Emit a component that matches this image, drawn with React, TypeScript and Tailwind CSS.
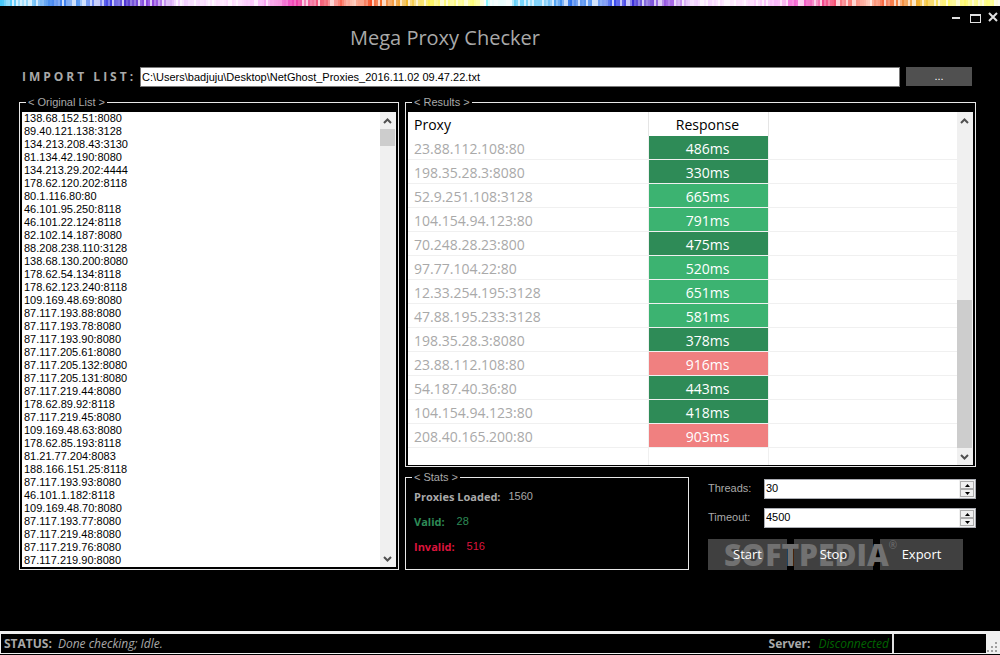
import { useState } from 'react';

const originalList = [
  '138.68.152.51:8080', '89.40.121.138:3128', '134.213.208.43:3130', '81.134.42.190:8080',
  '134.213.29.202:4444', '178.62.120.202:8118', '80.1.116.80:80', '46.101.95.250:8118',
  '46.101.22.124:8118', '82.102.14.187:8080', '88.208.238.110:3128', '138.68.130.200:8080',
  '178.62.54.134:8118', '178.62.123.240:8118', '109.169.48.69:8080', '87.117.193.88:8080',
  '87.117.193.78:8080', '87.117.193.90:8080', '87.117.205.61:8080', '87.117.205.132:8080',
  '87.117.205.131:8080', '87.117.219.44:8080', '178.62.89.92:8118', '87.117.219.45:8080',
  '109.169.48.63:8080', '178.62.85.193:8118', '81.21.77.204:8083', '188.166.151.25:8118',
  '87.117.193.93:8080', '46.101.1.182:8118', '109.169.48.70:8080', '87.117.193.77:8080',
  '87.117.219.48:8080', '87.117.219.76:8080', '87.117.219.90:8080',
];

const results: [string, number][] = [
  ['23.88.112.108:80', 486],
  ['198.35.28.3:8080', 330],
  ['52.9.251.108:3128', 665],
  ['104.154.94.123:80', 791],
  ['70.248.28.23:800', 475],
  ['97.77.104.22:80', 520],
  ['12.33.254.195:3128', 651],
  ['47.88.195.233:3128', 581],
  ['198.35.28.3:8080', 378],
  ['23.88.112.108:80', 916],
  ['54.187.40.36:80', 443],
  ['104.154.94.123:80', 418],
  ['208.40.165.200:80', 903],
];

const responseColor = (ms: number) => {
  if (ms < 500) return 'bg-[#2e8b57]';
  if (ms < 900) return 'bg-[#3cb371]';
  return 'bg-[#f08080]';
};

// position, r, g, b
const spectrum = [
  [-31, 60, 240, 255], [-26, 230, 255, 255], [-6, 225, 255, 255], [0, 70, 200, 250], [30, 110, 200, 250],
  [55, 40, 110, 235], [80, 80, 150, 245], [103, 20, 30, 230], [128, 90, 60, 210], [150, 130, 50, 220],
  [175, 240, 205, 255], [220, 255, 225, 255], [260, 250, 180, 250], [288, 240, 60, 190], [320, 245, 80, 110],
  [340, 250, 90, 70], [352, 255, 190, 170], [370, 245, 75, 30], [405, 240, 180, 40], [430, 255, 245, 90],
  [475, 255, 255, 110], [484, 255, 255, 255],
];

const spectrumAt = (x: number) => {
  const pos = x > 484 ? x - 515 : x;
  const i = Math.max(1, spectrum.findIndex((s) => s[0] >= pos));
  const [a, b] = [spectrum[i - 1], spectrum[i]];
  const t = (pos - a[0]) / (b[0] - a[0]);
  const noise = Math.abs(Math.sin(x * 12.9898) * 43758.5453) % 1;
  const white = noise > 0.75 ? 0.75 : noise * 0.6;
  const c = [1, 2, 3].map((k) => {
    const v = a[k] + (b[k] - a[k]) * t;
    return Math.round(v + (255 - v) * white);
  });
  return `rgb(${c.join(',')})`;
};

const stripes = Array.from({ length: 500 }, (_, i) => i * 2);

function SpectrumBar() {
  return (
    <svg className="block w-full h-1.5" viewBox="0 0 1000 6" preserveAspectRatio="none" shapeRendering="crispEdges" aria-hidden="true">
      {stripes.map((x) => (
        <rect key={x} x={x} y="0" width="2" height="6" fill={spectrumAt(x)} />
      ))}
    </svg>
  );
}

function Chevron({ down = false }: { down?: boolean }) {
  return (
    <svg className="w-4 h-[17px] shrink-0" viewBox="0 0 16 17" fill="none" stroke="#505050" strokeWidth="2" aria-hidden="true">
      <path d={down ? 'M4 7l3.5 3.5L11 7' : 'M4 11l3.5-3.5L11 11'} />
    </svg>
  );
}

function Scrollbar({ before, thumb }: { before: string; thumb: string }) {
  return (
    <div className="w-4 shrink-0 bg-[#f0f0f0] flex flex-col" aria-hidden="true">
      <Chevron />
      <div className="flex-1 flex flex-col">
        <div className={before} />
        <div className={`w-[15px] bg-[#cdcdcd] ${thumb}`} />
      </div>
      <Chevron down />
    </div>
  );
}

function NumberField({ id, label, initial }: { id: string; label: string; initial: number }) {
  const [value, setValue] = useState(initial);

  return (
    <div className="flex">
      <label htmlFor={id} className="w-14 shrink-0 leading-[18px] text-[#a9a9a9]">{label}</label>
      <div className="flex-1 min-w-0 h-5 flex bg-white border border-[#abadb3]">
        <input
          id={id}
          type="number"
          value={value}
          onChange={(e) => setValue(Number(e.target.value))}
          className="flex-1 min-w-0 px-px leading-4 pb-0.5 text-black outline-none [appearance:textfield] [&::-webkit-inner-spin-button]:appearance-none"
        />
        <div className="w-4 shrink-0 bg-[#f0f0f0] p-px flex flex-col">
          {[1, -1].map((step) => (
            <button
              key={step}
              type="button"
              aria-label={step > 0 ? `Increase ${label}` : `Decrease ${label}`}
              onClick={() => setValue(value + step)}
              className="flex-1 border border-[#acacac] flex items-center justify-center"
            >
              <svg className="w-[5px] h-[3px]" viewBox="0 0 5 3" aria-hidden="true">
                <path d={step > 0 ? 'M0 3L2.5 0L5 3z' : 'M0 0h5L2.5 3z'} fill="#000" />
              </svg>
            </button>
          ))}
        </div>
      </div>
    </div>
  );
}

const legend = 'ml-1 px-0.5 leading-[13px] text-[#a9a9a9]';
const segoe = "font-['Open_Sans',sans-serif]";

export default function App() {
  const [path, setPath] = useState('C:\\Users\\badjuju\\Desktop\\NetGhost_Proxies_2016.11.02 09.47.22.txt');

  return (
    <div className="min-h-screen flex flex-col bg-black text-[11px] font-['Liberation_Sans',Arial,sans-serif]">
      <SpectrumBar />

      <header className="flex justify-between h-[61px]">
        <h1 className={`pl-[350px] pt-[18px] text-[20px] leading-7 text-[#a9a9a9] ${segoe}`}>Mega Proxy Checker</h1>
        <div className="flex items-start gap-1.5 pt-1.5 pr-px">
          <button type="button" aria-label="Minimize">
            <svg className="w-3 h-3" viewBox="0 0 12 12" shapeRendering="crispEdges">
              <path d="M1 5h8v2H1z" fill="#e0e0e0" />
            </svg>
          </button>
          <button type="button" aria-label="Maximize">
            <svg className="w-3 h-3" viewBox="0 0 12 12" shapeRendering="crispEdges">
              <path fillRule="evenodd" d="M1 2h11v9H1zM2 4v6h9V4z" fill="#e0e0e0" />
            </svg>
          </button>
          <button type="button" aria-label="Close">
            <svg className="w-3 h-3" viewBox="0 0 12 12">
              <path d="M2 1l8 8M10 1l-8 8" stroke="#e0e0e0" strokeWidth="2" />
            </svg>
          </button>
        </div>
      </header>

      <main className="pl-[19px] pr-6">
        <div className="flex pr-1">
          <label htmlFor="import" className={`w-[121px] shrink-0 pl-[3px] text-[12px] leading-5 font-bold tracking-[3px] whitespace-nowrap text-[#a9a9a9] ${segoe}`}>
            IMPORT LIST:
          </label>
          <input
            id="import"
            type="text"
            value={path}
            onChange={(e) => setPath(e.target.value)}
            className="flex-1 min-w-0 h-5 px-px bg-white border border-[#7a7a7a] text-black"
          />
          <button type="button" className="ml-1.5 w-[66px] h-[19px] bg-[#505050] text-white">...</button>
        </div>

        <div className="mt-[9px] grid grid-cols-[380fr_571fr] gap-1.5 items-start">
          <fieldset className="min-w-0 border border-[#e8e8e8] pt-[3px] px-0.5 pb-0.5">
            <legend className={legend}>&lt; Original List &gt;</legend>
            <div className="flex bg-white">
              <textarea
                readOnly
                rows={35}
                wrap="off"
                aria-label="Original List"
                value={originalList.join('\n')}
                className="flex-1 min-w-0 pl-0.5 leading-[13px] text-black resize-none overflow-hidden outline-none"
              />
              <Scrollbar before="h-0" thumb="h-[17px]" />
            </div>
          </fieldset>

          <div className="min-w-0">
            <fieldset className="min-w-0 border border-[#e8e8e8] pt-[3px] px-0.5 pb-px">
              <legend className={legend}>&lt; Results &gt;</legend>
              <div className="flex bg-white">
                <table className={`flex-1 table-fixed border-separate border-spacing-0 text-[14px] leading-[21px] ${segoe}`}>
                  <thead>
                    <tr className="h-6 text-black">
                      <th className="w-[241px] p-0 pl-1.5 text-left font-normal border-r border-[#e5e5e5]">Proxy</th>
                      <th className="w-[120px] p-0 pr-0.5 font-normal border-r border-[#e5e5e5]">Response</th>
                      <th className="p-0" />
                    </tr>
                  </thead>
                  <tbody>
                    {results.map(([proxy, ms], i) => (
                      <tr key={i} className="h-6">
                        <td className="p-0 pt-0.5 pl-1.5 border-r border-b border-[#f0f0f0] text-[#a9a9a9]">{proxy}</td>
                        <td className={`p-0 pt-0.5 pr-0.5 text-center text-white border-r border-b border-[#f0f0f0] ${responseColor(ms)}`}>{ms}ms</td>
                        <td className="p-0 border-b border-[#f0f0f0]" />
                      </tr>
                    ))}
                    <tr className="h-[17px]">
                      <td className="p-0 border-r border-[#f0f0f0]" />
                      <td className="p-0 border-r border-[#f0f0f0]" />
                      <td className="p-0" />
                    </tr>
                  </tbody>
                </table>
                <Scrollbar before="flex-1" thumb="h-[148px]" />
              </div>
            </fieldset>

            <div className="mt-1 grid grid-cols-[284fr_268fr] gap-[19px]">
              <fieldset className="min-w-0 border border-[#e8e8e8] px-0.5 pb-2.5">
                <legend className={legend}>&lt; Stats &gt;</legend>
                <dl className="pl-1.5 leading-[25px]">
                  <div className="flex gap-2 text-[#a9a9a9]">
                    <dt className={`font-bold ${segoe}`}>Proxies Loaded:</dt>
                    <dd>1560</dd>
                  </div>
                  <div className="flex gap-3 text-[#2e8b57]">
                    <dt className={`font-bold ${segoe}`}>Valid:</dt>
                    <dd>28</dd>
                  </div>
                  <div className="flex gap-3 text-[#dc143c]">
                    <dt className={`font-bold ${segoe}`}>Invalid:</dt>
                    <dd>516</dd>
                  </div>
                </dl>
              </fieldset>

              <div className="min-w-0 pt-2 flex flex-col gap-[9px]">
                <NumberField id="threads" label="Threads:" initial={30} />
                <NumberField id="timeout" label="Timeout:" initial={4500} />
                <div className={`relative mt-0.5 flex gap-[7px] text-[13px] text-white ${segoe}`}>
                  <button type="button" className="w-[79px] h-[31px] bg-[#404040]">
                    <span className="relative z-10">Start</span>
                  </button>
                  <button type="button" className="w-[79px] h-[31px] bg-[#404040]">
                    <span className="relative z-10">Stop</span>
                  </button>
                  <button type="button" className="w-[83px] h-[31px] bg-[#404040]">
                    <span className="relative z-10">Export</span>
                  </button>
                  <div className="absolute left-4 top-0 flex items-start pointer-events-none text-[#717171]">
                    <span className="text-[30px] leading-8 font-extrabold">SOFTPEDIA</span>
                    <span className="text-[10px] leading-3">®</span>
                  </div>
                </div>
              </div>
            </div>
          </div>
        </div>
      </main>

      <footer className={`mt-auto mb-px flex h-[23px] border-t-[3px] border-b border-l border-[#f0f0f0] text-[12px] leading-[19px] ${segoe}`}>
        <div className="flex-1 flex gap-1.5 pl-[3px] text-[#a9a9a9]">
          <strong>STATUS:</strong>
          <em>Done checking; Idle.</em>
        </div>
        <div className="flex gap-2 pr-[3px] border-r-2 border-[#e0e0e0]">
          <strong className="text-[#a9a9a9]">Server:</strong>
          <em className="text-[#006400]">Disconnected</em>
        </div>
        <div className="w-[92px]" />
        <div className="w-3.5 bg-[#f0f0f0] flex items-end">
          <svg className="w-3.5 h-3.5" viewBox="0 0 14 14" fill="#a0a0a0" shapeRendering="crispEdges" aria-hidden="true">
            <path d="M9 3h2v2H9zM9 7h2v2H9zM5 7h2v2H5zM9 11h2v2H9zM5 11h2v2H5zM1 11h2v2H1z" />
          </svg>
        </div>
      </footer>
    </div>
  );
}
